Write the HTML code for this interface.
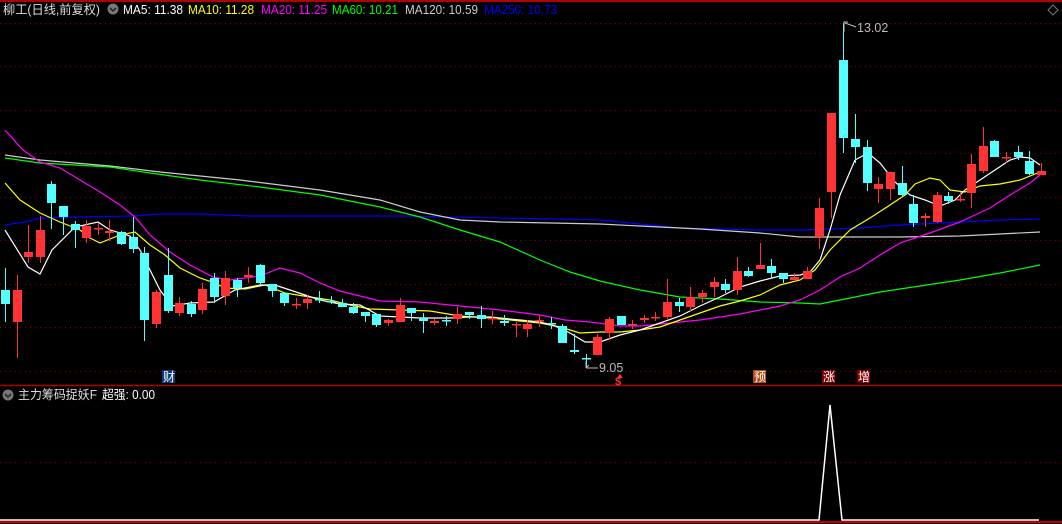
<!DOCTYPE html>
<html><head><meta charset="utf-8"><style>
html,body{margin:0;padding:0;background:#000;width:1062px;height:524px;overflow:hidden}
svg{display:block}
text{font-family:"Liberation Sans","Noto Sans CJK SC",sans-serif}
</style></head><body>
<svg id="s" width="1062" height="524" xmlns="http://www.w3.org/2000/svg">
<rect width="1062" height="524" fill="#000"/>
<line x1="0" y1="1" x2="1062" y2="1" stroke="#b00000" stroke-width="2"/>
<g stroke="#8a0000" stroke-width="1" stroke-dasharray="1,4">
<line x1="0" y1="23.5" x2="1062" y2="23.5"/><line x1="0" y1="66.5" x2="1062" y2="66.5"/>
<line x1="0" y1="110.5" x2="1062" y2="110.5"/><line x1="0" y1="153.5" x2="1062" y2="153.5"/>
<line x1="0" y1="197.5" x2="1062" y2="197.5"/><line x1="0" y1="240.5" x2="1062" y2="240.5"/>
<line x1="0" y1="284.5" x2="1062" y2="284.5"/><line x1="0" y1="327.5" x2="1062" y2="327.5"/>
<line x1="0" y1="371.5" x2="1062" y2="371.5"/><line x1="0" y1="462.5" x2="1062" y2="462.5"/>
</g>
<line x1="0" y1="385.5" x2="1062" y2="385.5" stroke="#b00000" stroke-width="1.5"/>
<line x1="0" y1="522" x2="1062" y2="522" stroke="#c00000" stroke-width="2"/>
<g id="lines" fill="none" stroke-width="1.2"></g>
<g id="candles"></g>
<polyline points="0,520 819,520 830,405 842,520 1039,520" fill="none" stroke="#fff" stroke-width="1.5"/>
<!-- header -->
<text x="3" y="14" font-size="12.5" fill="#ddd" textLength="97" lengthAdjust="spacingAndGlyphs">柳工(日线,前复权)</text>
<circle cx="113" cy="9" r="5.5" fill="#777"/><path d="M110,8 L113,11 L116,8" stroke="#222" stroke-width="1.5" fill="none"/>
<g font-size="12.5">
<text x="123" y="14" fill="#fff" textLength="60" lengthAdjust="spacingAndGlyphs">MA5: 11.38</text>
<text x="188" y="14" fill="#ff0" textLength="66" lengthAdjust="spacingAndGlyphs">MA10: 11.28</text>
<text x="261" y="14" fill="#f0f" textLength="66" lengthAdjust="spacingAndGlyphs">MA20: 11.25</text>
<text x="332" y="14" fill="#0f0" textLength="66" lengthAdjust="spacingAndGlyphs">MA60: 10.21</text>
<text x="405" y="14" fill="#ccc" textLength="73" lengthAdjust="spacingAndGlyphs">MA120: 10.59</text>
<text x="484" y="14" fill="#00f" textLength="73" lengthAdjust="spacingAndGlyphs">MA250: 10.73</text>
</g>
<path d="M1053,5 L1058,10 L1053,15 L1048,10 Z" fill="none" stroke="#777"/>
<!-- price labels -->
<path d="M844,32 L844,22 L848,22 M845,23 L856,27" stroke="#bbb" fill="none"/>
<text x="857" y="32" font-size="12.5" fill="#bbb">13.02</text>
<path d="M586,361 L586,368 M586,368 L598,368 M586,368 L589,365" stroke="#bbb" fill="none"/>
<text x="599" y="372" font-size="12.5" fill="#bbb">9.05</text>
<!-- markers -->
<rect x="162" y="370" width="13" height="13" fill="#0a3a7a"/><text x="163" y="381" font-size="12" fill="#fff">财</text>
<path d="M620,374 L617,378 L623,378 Z" fill="#f33"/><text x="615" y="385" font-size="11" fill="#f33" font-weight="bold">$</text>
<rect x="753" y="370" width="13" height="13" fill="#b04a10"/><text x="754" y="381" font-size="12" fill="#fff">预</text>
<rect x="822" y="370" width="13" height="13" fill="#800000"/><text x="823" y="381" font-size="12" fill="#fff">涨</text>
<rect x="857" y="370" width="13" height="13" fill="#800000"/><text x="858" y="381" font-size="12" fill="#fff">增</text>
<!-- lower header -->
<circle cx="8" cy="395" r="5.5" fill="#777"/><path d="M5,394 L8,397 L11,394" stroke="#222" stroke-width="1.5" fill="none"/>
<text x="18" y="399" font-size="12.5" fill="#ddd" textLength="79" lengthAdjust="spacingAndGlyphs">主力筹码捉妖F</text>
<text x="102" y="399" font-size="12.5" fill="#fff" textLength="53" lengthAdjust="spacingAndGlyphs">超强: 0.00</text>
</svg>
<script>
var NS="http://www.w3.org/2000/svg";
var L=document.getElementById("lines");
function pl(c,p){var e=document.createElementNS(NS,"polyline");e.setAttribute("points",p);e.setAttribute("stroke",c);L.appendChild(e);}
pl("#00f","5,225 25,222 40,218 80,217 130,216 160,214 200,214 250,216 400,216 600,220 680,228 760,230 800,230 860,228 900,225 960,222 1000,220 1040,219");
pl("#ccc","5,155 40,160 110,166 160,172 240,180 320,190 380,200 420,212 460,220 500,222 600,224 700,229 760,233 800,237 840,237 900,237 960,236 1000,234 1040,232");
pl("#0f0","5,158 40,163 110,167 150,173 200,180 260,187 320,195 380,207 420,217 460,230 500,242 540,260 570,272 600,281 640,290 680,297 720,299 760,302 800,303 820,304 840,300 880,292 920,286 960,280 1000,273 1040,265");
pl("#f0f","5,130 23,150 40,162 60,168 80,180 100,192 120,205 135,217 150,235 170,252 190,265 213,277 230,280 260,276 280,268 300,273 320,283 340,291 380,301 420,302 460,306 500,310 540,315 565,320 590,322 620,326 640,326 660,324 700,320 740,314 780,306 800,300 820,290 840,277 860,268 880,255 900,243 930,233 960,222 990,208 1010,195 1030,183 1040,175");
pl("#ff0","5,183 20,200 40,213 60,222 80,230 90,238 100,243 120,235 135,232 150,245 165,255 180,268 200,278 215,283 225,288 245,289 265,285 285,293 310,297 330,300 350,305 370,309 400,310 430,311 460,316 490,318 520,321 540,323 560,327 580,333 600,332 620,332 640,330 660,327 680,320 700,313 720,306 740,301 760,295 780,285 800,280 815,270 830,250 850,230 870,218 890,205 905,195 915,184 930,178 940,180 950,190 965,192 980,186 1000,184 1020,180 1040,172");
pl("#fff","5,230 28,267 40,274 52,250 75,227 98,222 110,230 130,236 140,250 160,290 172,306 190,303 214,302 235,290 260,285 275,285 290,290 320,300 340,304 360,305 380,316 400,317 420,318 450,318 470,317 490,317 520,320 540,322 555,326 570,333 585,342 600,342 620,335 640,330 660,323 680,316 700,306 720,297 740,287 760,281 780,276 800,275 810,272 820,260 830,230 840,195 855,160 868,153 880,163 895,182 910,195 925,200 940,206 955,200 965,190 980,180 995,170 1010,160 1020,157 1030,158 1040,165");
var C=[
[5,268,290,304,322,0],[17,275,290,322,358,1],[28,225,252,257,263,1],[40,216,230,257,263,1],[51,181,184,203,229,0],[63,206,206,217,235,0],[75,221,224,230,248,0],[86,220,226,238,243,1],[98,223,228,229,235,1],[109,220,231,233,241,1],[121,231,232,244,245,0],[133,217,237,249,253,0],[144,247,253,320,341,0],[156,290,292,324,328,1],[168,248,275,311,313,0],[179,297,303,313,316,1],[191,301,304,314,317,0],[202,283,289,310,314,1],[214,273,278,297,303,0],[225,271,278,296,305,1],[237,278,280,288,297,0],[248,267,275,277,283,1],[260,264,265,283,285,0],[272,284,284,291,297,0],
[284,293,293,303,306,0],[296,298,304,305,309,1],[307,295,299,303,309,1],[319,291,299,300,303,0],[331,296,301,302,304,0],[342,299,303,307,307,0],[353,303,307,313,314,0],[365,312,312,316,322,0],[376,314,314,325,327,0],[388,319,320,323,326,1],[400,298,305,322,322,1],[411,308,308,313,321,0],[423,313,318,321,333,0],[434,319,321,323,325,1],[446,316,320,321,326,0],[457,307,314,319,324,1],[469,312,312,315,319,0],[481,306,315,319,328,0],[492,311,318,319,324,1],[504,315,321,323,326,0],[516,322,324,325,337,1],[527,320,324,329,337,1],[539,315,320,321,327,1],[551,317,323,324,329,0],[562,324,326,343,343,0],[574,334,350,352,354,0],[586,354,358,359,367,0],[597,334,337,355,355,1],[609,317,319,333,340,1],[621,316,316,325,325,0],[632,320,324,325,329,1],[644,315,318,320,323,1],[655,312,317,318,321,1],[667,279,302,317,319,1],[679,298,302,306,312,0],[690,287,297,307,311,1],[702,290,293,297,303,1],[714,277,282,287,297,1],[725,279,284,290,293,0],[737,257,271,290,295,1],[748,267,271,276,277,0],[760,243,265,269,269,1],[771,259,266,273,279,0],[783,273,273,279,283,0],[794,273,277,280,280,1],[807,267,271,279,279,1],
[819,198,208,237,249,1],[831,113,113,192,218,1],[843,23,60,138,153,0],[855,114,139,147,163,0],[867,140,147,183,191,0],[878,177,184,189,203,1],[890,172,172,189,200,1],[902,166,183,195,197,0],[913,195,204,223,227,0],[925,213,216,218,227,1],[937,192,195,222,223,1],[948,192,196,201,204,0],[960,192,199,200,202,1],[971,154,164,193,208,1],[983,127,146,171,173,1],[994,140,141,157,157,0],[1006,152,157,158,163,1],[1018,146,152,157,160,0],[1029,151,161,174,175,0],[1041,163,171,175,175,1]];
var G=document.getElementById("candles"),h="";
C.forEach(function(c){var col=c[5]?"#ff3333":"#54ffff";
h+='<line x1="'+(c[0]+.5)+'" y1="'+c[1]+'" x2="'+(c[0]+.5)+'" y2="'+c[4]+'" stroke="'+col+'"/>';
var bh=Math.max(1.5,c[3]-c[2]);h+='<rect x="'+(c[0]-4)+'" y="'+c[2]+'" width="9" height="'+bh+'" fill="'+col+'"/>';});
G.innerHTML=h;
</script>
</body></html>
